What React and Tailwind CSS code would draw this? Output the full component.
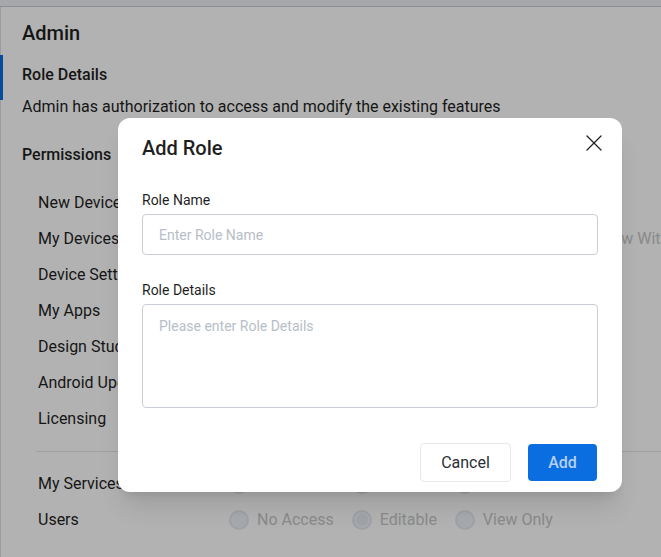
import { X } from 'lucide-react';

const rows = [
  { name: 'New Devices' },
  { name: 'My Devices', extra: 'View With Alerts' },
  { name: 'Device Settings' },
  { name: 'My Apps' },
  { name: 'Design Studio' },
  { name: 'Android Updates' },
  { name: 'Licensing' },
];

function Radio({ label, checked }) {
  return (
    <div className="flex items-center gap-[8px]">
      <span className="flex h-[20px] w-[20px] items-center justify-center rounded-full border-2 border-[#e3e7ee] bg-[#eef2f9]">
        {checked && <span className="h-[12px] w-[12px] rounded-full bg-[#e6eaf1]" />}
      </span>
      <span className="text-[16px] leading-[20px] text-[#c6c6c6] whitespace-nowrap">{label}</span>
    </div>
  );
}

function PermissionRow({ name, extra }) {
  return (
    <div className="flex h-[36px] items-center">
      <div className="w-[191px] shrink-0 text-[16px] text-[#1f1f1f] whitespace-nowrap">{name}</div>
      <div className="flex items-center gap-[18px]">
        <Radio label="No Access" />
        <Radio label="Editable" checked />
        <Radio label="View Only" />
        {extra && <Radio label={extra} />}
      </div>
    </div>
  );
}

export default function App() {
  return (
    <div
      className="relative h-[557px] w-full overflow-hidden bg-white"
      style={{ fontFamily: 'Roboto, "Liberation Sans", sans-serif' }}
    >
      <div className="h-[7px] border-b border-[#c8cdd5] bg-[#eef1f5]" />

      {/* Page */}
      <div className="relative h-[550px] border-l border-[#dfe2e6] pl-[21px]">
        <span className="absolute left-[-1px] top-[48px] h-[45px] w-[3px] bg-[#0a6ee0]" />
        <h1 className="pt-[13px] text-[20px] leading-[26px] font-medium text-[#1f1f1f]">Admin</h1>
        <h2 className="mt-[19px] text-[16px] leading-[20px] font-medium text-[#1f1f1f]">Role Details</h2>
        <p className="mt-[10px] text-[16px] leading-[24px] text-[#1f1f1f]">
          Admin has authorization to access and modify the existing features
        </p>
        <h2 className="mt-[26px] text-[16px] leading-[20px] font-medium text-[#1f1f1f]">Permissions</h2>

        <div className="mt-[20px] pl-[16px]">
          {rows.map((r) => (
            <PermissionRow key={r.name} name={r.name} extra={r.extra} />
          ))}
        </div>
        <div className="mt-[14px] ml-[14px] border-t border-[#e2e4e8]" />
        <div className="mt-[14px] pl-[16px]">
          <PermissionRow name="My Services" />
          <PermissionRow name="Users" />
        </div>
      </div>

      {/* Backdrop */}
      <div className="absolute inset-0 bg-black/30" />

      {/* Modal */}
      <div className="absolute left-[118px] top-[118px] w-[504px] rounded-[12px] bg-white px-[24px] pt-[18px] pb-[10px] shadow-xl">
        <h3 className="text-[20px] leading-[24px] font-medium text-[#1f1f1f]">Add Role</h3>
        <button type="button" className="absolute right-[14px] top-[11px] text-[#222]">
          <X className="h-[28px] w-[28px]" strokeWidth={1.1} />
        </button>

        <label className="mt-[30px] block text-[14px] leading-[20px] text-[#1f1f1f]">Role Name</label>
        <input
          className="mt-[4px] block h-[41px] w-full rounded-[4px] border border-[#c9ced5] px-[16px] text-[14px] placeholder:text-[#b7bec7] outline-none"
          placeholder="Enter Role Name"
        />

        <label className="mt-[25px] block text-[14px] leading-[20px] text-[#1f1f1f]">Role Details</label>
        <textarea
          className="mt-[4px] block h-[104px] w-full resize-none rounded-[4px] border border-[#c9ced5] px-[16px] py-[12px] text-[14px] leading-[18px] placeholder:text-[#b7bec7] outline-none"
          placeholder="Please enter Role Details"
        />

        <div className="mt-[35px] mr-[1px] flex justify-end gap-[17px]">
          <button
            type="button"
            className="h-[39px] w-[91px] rounded-[4px] border border-[#e6e8eb] bg-white text-[16px] text-[#2a2f36]"
          >
            Cancel
          </button>
          <button
            type="button"
            className="mt-[1px] h-[37px] w-[69px] rounded-[4px] bg-[#0a6ee0] text-[16px] font-medium text-[#b5d0f3]"
          >
            Add
          </button>
        </div>
      </div>
    </div>
  );
}
